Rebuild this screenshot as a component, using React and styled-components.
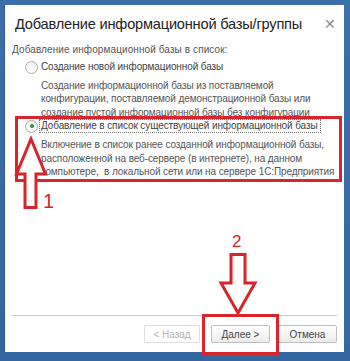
import React from 'react';
import styled, { createGlobalStyle } from 'styled-components';

const Global = createGlobalStyle`
  html, body {
    margin: 0;
    background: #3b6ea6;
  }
  body {
    font-family: 'Liberation Sans', Arial, sans-serif;
  }
`;

const Page = styled.div`
  width: 350px;
  height: 361px;
  padding: 5px 6px 9px 5px;
  box-sizing: border-box;
  background: linear-gradient(#3d70a9, #34679f);
`;

const Dialog = styled.div`
  position: relative;
  height: 100%;
  background: #fff;
  display: flex;
  flex-direction: column;
  box-shadow: -1px 0 0 #2c5a8e;
`;

const Header = styled.div`
  display: flex;
  align-items: center;
  justify-content: space-between;
  height: 38px;
  padding: 0 8px 0 10px;
`;

const Title = styled.h1`
  margin: 0;
  font-size: 14.6px;
  letter-spacing: -0.2px;
  font-weight: normal;
  color: #222;
  white-space: nowrap;
`;

const Close = styled.span`
  font-size: 14px;
  color: #8a8a8a;
  line-height: 1;
`;

const Body = styled.div`
  flex: 1;
  padding: 0 7px;
  font-size: 10px;
  letter-spacing: -0.1px;
  color: #555;
`;

const Caption = styled.div`
  line-height: 13px;
  white-space: nowrap;
  letter-spacing: 0.1px;
`;

const Option = styled.div`
  display: flex;
  align-items: center;
  gap: 1px;
  margin: ${p => p.$top}px 0 0 13px;
`;

const Radio = styled.span`
  width: 11px;
  height: 11px;
  border-radius: 50%;
  border: 1px solid #ababab;
  background: linear-gradient(#f2f2f2, #fff);
  display: flex;
  align-items: center;
  justify-content: center;
  &::after {
    content: '';
    display: ${p => (p.$checked ? 'block' : 'none')};
    width: 4px;
    height: 4px;
    border-radius: 50%;
    background: #2f8a3a;
  }
`;

const Label = styled.span`
  color: #3f3f3f;
  line-height: 12px;
  padding: 0 2px 0 1px;
  white-space: nowrap;
  border: 1px dotted ${p => (p.$focus ? '#777' : 'transparent')};
`;

const Desc = styled.div`
  margin: ${p => p.$top}px 0 0 29px;
  line-height: 13.4px;
  white-space: nowrap;
`;

const Footer = styled.div`
  margin: 0 7px;
  border-top: 1px solid #c9c9c9;
  display: flex;
  justify-content: flex-end;
  gap: 8px;
  padding: 9px 0;
`;

const Button = styled.button`
  width: ${p => p.$w}px;
  height: 18px;
  padding: 0;
  margin-right: ${p => p.$after || 0}px;
  font-family: inherit;
  font-size: 10px;
  border: 1px solid #bdbdbd;
  border-radius: 2px;
  background: linear-gradient(#ffffff, #ececec);
  color: #444;
  &:disabled {
    color: #b4b4b4;
    border-color: #dedede;
    background: #fff;
  }
`;

const Frame = styled.div`
  position: absolute;
  left: ${p => p.$x}px;
  top: ${p => p.$y}px;
  width: ${p => p.$w}px;
  height: ${p => p.$h}px;
  border: 3px solid #d9232d;
  box-sizing: border-box;
  pointer-events: none;
`;

const Mark = styled.svg`
  position: absolute;
  left: ${p => p.$x}px;
  top: ${p => p.$y}px;
  overflow: visible;
`;

const Num = styled.span`
  position: absolute;
  left: ${p => p.$x}px;
  top: ${p => p.$y}px;
  font-family: 'Liberation Sans', Arial, sans-serif;
  font-size: ${p => p.$size}px;
  color: #d9232d;
  line-height: 1;
`;

export default function App() {
  return (
    <>
      <Global />
      <Page>
        <Dialog>
          <Header>
            <Title>Добавление информационной базы/группы</Title>
            <Close>✕</Close>
          </Header>
          <Body>
            <Caption>Добавление информационной базы в список:</Caption>
            <Option $top={4}>
              <Radio />
              <Label>Создание новой информационной базы</Label>
            </Option>
            <Desc $top={5}>
              Создание информационной базы из поставляемой<br />
              конфигурации, поставляемой демонстрационной базы или<br />
              создание пустой информационной базы без конфигурации
            </Desc>
            <Option $top={0}>
              <Radio $checked />
              <Label $focus>Добавление в список существующей информационной базы</Label>
            </Option>
            <Desc $top={5}>
              Включение в список ранее созданной информационной базы,<br />
              расположенной на веб-сервере (в интернете), на данном<br />
              компьютере,&nbsp; в локальной сети или на сервере 1С:Предприятия
            </Desc>
          </Body>
          <Footer>
            <Button $w={56} $after={3} disabled>&lt; Назад</Button>
            <Button $w={59}>Далее &gt;</Button>
            <Button $w={59}>Отмена</Button>
          </Footer>

          <Frame $x={10} $y={111} $w={327} $h={66} />
          <Mark $x={10} $y={132} width="34" height="72" viewBox="0 0 34 72">
            <path
              d="M16 2 L30.5 37 L21 37 L21 70.5 L10 70.5 L10 37 L1.5 37 Z"
              fill="#fff"
              stroke="#d9232d"
              strokeWidth="3"
            />
          </Mark>
          <Num $x={38} $y={186} $size={20}>1</Num>

          <Num $x={227} $y={228} $size={17}>2</Num>
          <Mark $x={214} $y={247} width="40" height="66" viewBox="0 0 40 66">
            <path
              d="M12 2.5 L26 2.5 L26 31 L36 31 L19 61 L2 31 L12 31 Z"
              fill="#fff"
              stroke="#d9232d"
              strokeWidth="3"
            />
          </Mark>
          <Frame $x={197} $y={309} $w={77} $h={41} />
        </Dialog>
      </Page>
    </>
  );
}
